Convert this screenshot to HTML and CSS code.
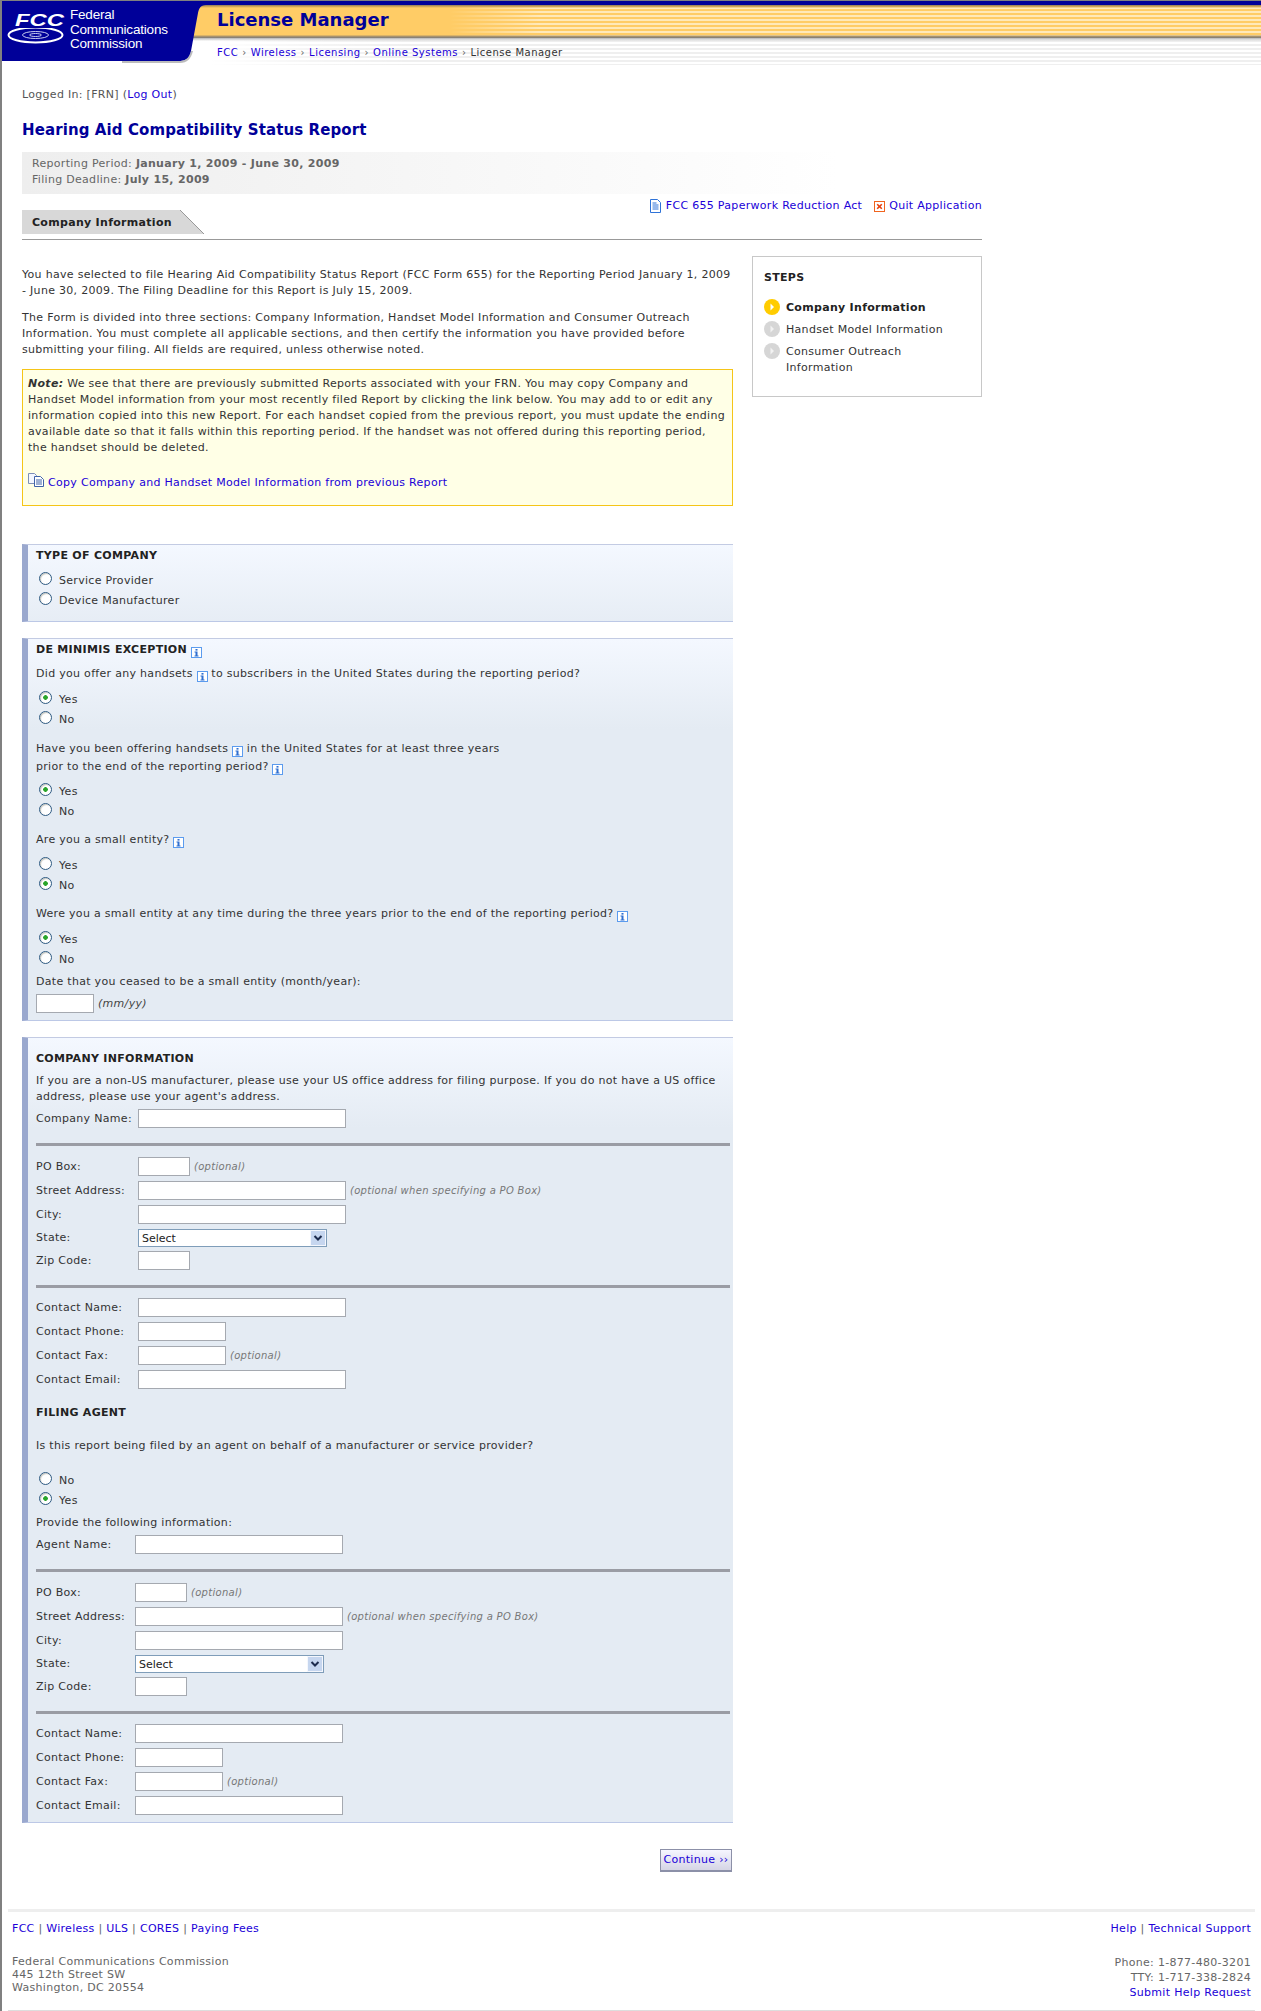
FILE: index.html
```html
<!DOCTYPE html>
<html lang="en">
<head>
<meta charset="utf-8">
<title>License Manager</title>
<link rel="stylesheet" href="styles.css">
</head>
<body>
<svg class="defs" width="0" height="0" aria-hidden="true">
  <defs>
    <symbol id="info" viewBox="0 0 11 11">
      <rect x="0.5" y="0.5" width="10" height="10" fill="#fff" stroke="#5b9bee"/>
      <rect x="4.5" y="2" width="2" height="1.6" fill="#2f6fd0"/>
      <path d="M3.500 4.500h3v4h1v1h-4v-1h1v-3h-1z" fill="#2f6fd0"/>
    </symbol>
  </defs>
</svg>

<header class="masthead">
  <div class="brand">
    <svg class="brand-shape" width="208" height="64" viewBox="0 0 208 64">
      <path d="M0 0H204V4C198 4 197 8 196 12L189 50C187 58 183 60 176 60H0Z" fill="#000099"/>
      <path d="M189 50C187 58 183 60 176 60H120V62H178C185 62 189 58 191 50Z" fill="#8f8f8f" opacity=".6"/>
      <ellipse cx="33.500" cy="34" rx="27" ry="7.500" fill="none" stroke="#fff" stroke-width="2"/>
      <ellipse cx="33.500" cy="34" rx="13" ry="3.500" fill="none" stroke="#c9cdf0" stroke-width="1"/>
      <ellipse cx="33.500" cy="34" rx="6" ry="1.500" fill="none" stroke="#c9cdf0" stroke-width="1"/>
      <rect x="10" y="12" width="54" height="15" fill="#000099"/>
      <text x="13" y="25" class="fcc-mark" textLength="49" lengthAdjust="spacingAndGlyphs">FCC</text>
    </svg>
    <div class="brand-name">Federal<br>Communications<br>Commission</div>
  </div>
  <div class="bands">
    <div class="title-band"><span class="app-title">License Manager</span></div>
    <nav class="crumbs"><a href="#">FCC</a><i>›</i><a href="#">Wireless</a><i>›</i><a href="#">Licensing</a><i>›</i><a href="#">Online Systems</a><i>›</i><span>License Manager</span></nav>
  </div>
</header>

<main class="page">
  <p class="login">Logged In: [FRN] (<a href="#">Log Out</a>)</p>
  <h1>Hearing Aid Compatibility Status Report</h1>
  <div class="period">
    <div>Reporting Period: <b>January 1, 2009 - June 30, 2009</b></div>
    <div>Filing Deadline: <b>July 15, 2009</b></div>
  </div>
  <div class="tabrow">
    <div class="tab">Company Information</div>
    <div class="toplinks">
      <svg class="ico-doc" width="11" height="14" viewBox="0 0 11 14"><path d="M.5.5h7l3 3v10H.5z" fill="#fff" stroke="#2f73d8"/><path d="M2.500 4h4M2.500 6h6M2.500 8h6M2.500 10h6" stroke="#2f73d8"/></svg>
      <a href="#">FCC 655 Paperwork Reduction Act</a>
      <svg class="ico-quit" width="11" height="11" viewBox="0 0 11 11"><rect x=".5" y=".5" width="10" height="10" fill="#fff" stroke="#f0641e"/><path d="M3.200 3.200l4.600 4.600M7.800 3.200L3.200 7.800" stroke="#e8400c" stroke-width="1.600"/></svg>
      <a href="#">Quit Application</a>
    </div>
  </div>

  <div class="columns">
    <div class="maincol">
      <p class="intro">You have selected to file Hearing Aid Compatibility Status Report (FCC Form 655) for the Reporting Period January 1, 2009 - June 30, 2009. The Filing Deadline for this Report is July 15, 2009.</p>
      <p class="intro">The Form is divided into three sections: Company Information, Handset Model Information and Consumer Outreach Information. You must complete all applicable sections, and then certify the information you have provided before submitting your filing. All fields are required, unless otherwise noted.</p>
      <div class="note">
        <p><b><em>Note:</em></b> We see that there are previously submitted Reports associated with your FRN. You may copy Company and Handset Model information from your most recently filed Report by clicking the link below. You may add to or edit any information copied into this new Report. For each handset copied from the previous report, you must update the ending available date so that it falls within this reporting period. If the handset was not offered during this reporting period, the handset should be deleted.</p>
        <div class="copylink">
          <svg class="ico-copy" width="16" height="14" viewBox="0 0 16 14"><path d="M.5.5h6l2 2v8H.5z" fill="#f4f7ff" stroke="#7d8fb8"/><path d="M6.500 3.500h6l3 3v7h-9z" fill="#fff" stroke="#3f62a8"/><path d="M8 7h6M8 9h6M8 11h6" stroke="#3f62a8"/></svg>
          <a href="#">Copy Company and Handset Model Information from previous Report</a>
        </div>
      </div>

      <form>
        <section class="panel panel-type">
          <h2>TYPE OF COMPANY</h2>
          <div class="choices">
            <label class="choice"><input type="radio" name="t"><span>Service Provider</span></label>
            <label class="choice"><input type="radio" name="t"><span>Device Manufacturer</span></label>
          </div>
        </section>

        <section class="panel panel-minimis">
          <h2>DE MINIMIS EXCEPTION <svg class="info"><use href="#info"/></svg></h2>
          <p class="q">Did you offer any handsets <svg class="info"><use href="#info"/></svg> to subscribers in the United States during the reporting period?</p>
          <div class="choices">
            <label class="choice"><input type="radio" name="a" checked><span>Yes</span></label>
            <label class="choice"><input type="radio" name="a"><span>No</span></label>
          </div>
          <p class="q q-two">Have you been offering handsets <svg class="info"><use href="#info"/></svg> in the United States for at least three years<br>prior to the end of the reporting period? <svg class="info"><use href="#info"/></svg></p>
          <div class="choices">
            <label class="choice"><input type="radio" name="b" checked><span>Yes</span></label>
            <label class="choice"><input type="radio" name="b"><span>No</span></label>
          </div>
          <p class="q">Are you a small entity? <svg class="info"><use href="#info"/></svg></p>
          <div class="choices">
            <label class="choice"><input type="radio" name="c"><span>Yes</span></label>
            <label class="choice"><input type="radio" name="c" checked><span>No</span></label>
          </div>
          <p class="q">Were you a small entity at any time during the three years prior to the end of the reporting period? <svg class="info"><use href="#info"/></svg></p>
          <div class="choices">
            <label class="choice"><input type="radio" name="d" checked><span>Yes</span></label>
            <label class="choice"><input type="radio" name="d"><span>No</span></label>
          </div>
          <p class="q q-date">Date that you ceased to be a small entity (month/year):</p>
          <div class="daterow"><input type="text" class="field w-date"><em class="unit">(mm/yy)</em></div>
        </section>

        <section class="panel panel-company">
          <h2>COMPANY INFORMATION</h2>
          <p class="lead">If you are a non-US manufacturer, please use your US office address for filing purpose. If you do not have a US office address, please use your agent's address.</p>
          <div class="row"><label>Company Name:</label><input type="text" class="field w-long"></div>
          <hr class="sep">
          <div class="row"><label>PO Box:</label><input type="text" class="field w-short"><em class="hint">(optional)</em></div>
          <div class="row"><label>Street Address:</label><input type="text" class="field w-long"><em class="hint">(optional when specifying a PO Box)</em></div>
          <div class="row"><label>City:</label><input type="text" class="field w-long"></div>
          <div class="row row-select"><label>State:</label><div class="selectbox"><select><option>Select</option></select><svg class="selectbtn" width="16" height="16" viewBox="0 0 16 16"><rect x=".5" y=".5" width="15" height="15" fill="#c6d6ef" stroke="#f4f7fd"/><path d="M4.500 6l3.500 3.500L11.500 6" fill="none" stroke="#1c2b4d" stroke-width="2"/></svg></div></div>
          <div class="row"><label>Zip Code:</label><input type="text" class="field w-short"></div>
          <hr class="sep sep-b">
          <div class="row"><label>Contact Name:</label><input type="text" class="field w-long"></div>
          <div class="row"><label>Contact Phone:</label><input type="text" class="field w-mid"></div>
          <div class="row"><label>Contact Fax:</label><input type="text" class="field w-mid"><em class="hint">(optional)</em></div>
          <div class="row"><label>Contact Email:</label><input type="text" class="field w-long"></div>

          <h2 class="agent-h">FILING AGENT</h2>
          <p class="q-agent">Is this report being filed by an agent on behalf of a manufacturer or service provider?</p>
          <div class="choices choices-agent">
            <label class="choice"><input type="radio" name="e"><span>No</span></label>
            <label class="choice"><input type="radio" name="e" checked><span>Yes</span></label>
          </div>
          <p class="q-provide">Provide the following information:</p>
          <div class="agent">
            <div class="row"><label>Agent Name:</label><input type="text" class="field w-long"></div>
            <hr class="sep">
            <div class="row"><label>PO Box:</label><input type="text" class="field w-short"><em class="hint">(optional)</em></div>
            <div class="row"><label>Street Address:</label><input type="text" class="field w-long"><em class="hint">(optional when specifying a PO Box)</em></div>
            <div class="row"><label>City:</label><input type="text" class="field w-long"></div>
            <div class="row row-select"><label>State:</label><div class="selectbox"><select><option>Select</option></select><svg class="selectbtn" width="16" height="16" viewBox="0 0 16 16"><rect x=".5" y=".5" width="15" height="15" fill="#c6d6ef" stroke="#f4f7fd"/><path d="M4.500 6l3.500 3.500L11.500 6" fill="none" stroke="#1c2b4d" stroke-width="2"/></svg></div></div>
            <div class="row"><label>Zip Code:</label><input type="text" class="field w-short"></div>
            <hr class="sep sep-b">
            <div class="row"><label>Contact Name:</label><input type="text" class="field w-long"></div>
            <div class="row"><label>Contact Phone:</label><input type="text" class="field w-mid"></div>
            <div class="row"><label>Contact Fax:</label><input type="text" class="field w-mid"><em class="hint">(optional)</em></div>
            <div class="row row-last"><label>Contact Email:</label><input type="text" class="field w-long"></div>
          </div>
        </section>
        <div class="actions"><a class="btn" href="#">Continue ››</a></div>
      </form>
    </div>

    <aside class="steps">
      <h3>STEPS</h3>
      <ol>
        <li class="current"><svg class="dot" width="16" height="16" viewBox="0 0 16 16"><circle cx="8" cy="8" r="8" fill="#ffcc00"/><path d="M6.500 4.500L10 8l-3.500 3.500z" fill="#fff"/></svg><span>Company Information</span></li>
        <li><svg class="dot" width="16" height="16" viewBox="0 0 16 16"><circle cx="8" cy="8" r="8" fill="#d6d6d6"/><path d="M6.500 4.500L10 8l-3.500 3.500z" fill="#f2f2f2"/></svg><span>Handset Model Information</span></li>
        <li><svg class="dot" width="16" height="16" viewBox="0 0 16 16"><circle cx="8" cy="8" r="8" fill="#d6d6d6"/><path d="M6.500 4.500L10 8l-3.500 3.500z" fill="#f2f2f2"/></svg><span>Consumer Outreach Information</span></li>
      </ol>
    </aside>
  </div>
</main>

<footer class="foot">
  <div class="foot-links">
    <div><a href="#">FCC</a> | <a href="#">Wireless</a> | <a href="#">ULS</a> | <a href="#">CORES</a> | <a href="#">Paying Fees</a></div>
    <div><a href="#">Help</a> | <a href="#">Technical Support</a></div>
  </div>
  <div class="foot-info">
    <address>Federal Communications Commission<br>445 12th Street SW<br>Washington, DC 20554</address>
    <div class="foot-contact">Phone: 1-877-480-3201<br>TTY: 1-717-338-2824<br><a href="#">Submit Help Request</a></div>
  </div>
</footer>
</body>
</html>
```
FILE: styles.css
```css
* { box-sizing: border-box; }
html, body { margin: 0; padding: 0; }
body {
  width: 1261px;
  height: 2011px;
  overflow: hidden;
  background: #fff;
  border-top: 1px solid #808080;
  border-left: 2px solid #808080;
  font: 11px/16px "DejaVu Sans", Verdana, sans-serif;
  letter-spacing: .3px;
  color: #333;
}
a { color: #2000d8; text-decoration: none; }
p { margin: 0; }
.defs { position: absolute; }

/* Masthead */
.masthead { display: flex; height: 64px; background: linear-gradient(#000099 4px, transparent 4px); }
.brand { position: relative; z-index: 1; flex: 0 0 208px; height: 64px; margin-right: -60px; }
.brand-shape { display: block; }
.fcc-mark { font: italic 700 17px "Liberation Sans", Arial, sans-serif; fill: #fff; letter-spacing: 0; }
.brand-name {
  position: absolute; left: 68px; top: 7px;
  font: 13.500px/14.500px "Liberation Sans", Arial, sans-serif;
  letter-spacing: -.2px;
  color: #fff;
}
.bands { flex: 1; display: flex; flex-direction: column; }
.title-band {
  height: 33px; margin-top: 4px;
  padding-left: 67px;
  background:
    linear-gradient(#8d7a5c, #e0b35a 2px, transparent 3px, transparent 30px, #b59a6a 31px, #7a7a7a 33px),
    linear-gradient(to right, #ffcc66 300px, rgba(255,204,102,0) 390px),
    repeating-linear-gradient(#ffcc66 0 2px, #ffe9ba 2px 4px);
}
.app-title { font: 700 18px/29px "DejaVu Sans", Verdana, sans-serif; letter-spacing: 0; color: #000099; }
.crumbs {
  height: 27px; padding: 7px 0 0 67px;
  font-size: 10px;
  letter-spacing: .5px;
  line-height: 16px;
  color: #333;
  background:
    linear-gradient(#b5b5b5, transparent 3px),
    linear-gradient(to right, #fff 60px, rgba(255,255,255,.4) 160px, rgba(255,255,255,0) 260px),
    repeating-linear-gradient(#fff 0 2px, #efefef 2px 4px);
}
.crumbs i { font-style: normal; margin: 0 4px; color: #666; }

/* Page */
.page { width: 960px; margin-left: 20px; }
.login { padding-top: 22px; color: #555; }
h1 { margin: 17px 0 0; font: 700 15px/20px "DejaVu Sans", Verdana, sans-serif; letter-spacing: .1px; color: #000099; }
.period {
  margin-top: 12px; height: 42px; padding: 4px 10px 0;
  background: linear-gradient(to right, #eeeeee, #fff 85%);
  color: #666;
}
.tabrow { display: flex; justify-content: space-between; height: 46px; padding-top: 4px; border-bottom: 1px solid #999; }
.tab {
  position: relative; margin-top: 12px; width: 158px; height: 24px;
  padding-left: 10px;
  line-height: 26px;
  font-weight: 700;
  color: #222;
  background: #d8d8d8;
}
.tab::after {
  content: ""; position: absolute; left: 158px; top: 0; width: 24px; height: 24px;
  background: linear-gradient(to top right, #d8d8d8 48%, #999 49%, #999 51%, transparent 52%);
}
.toplinks { display: flex; align-items: center; height: 16px; }
.ico-doc { margin-right: 5px; }
.ico-quit { margin: 0 4px 0 12px; }

.columns { display: flex; justify-content: space-between; align-items: flex-start; }
.maincol { width: 711px; padding-top: 27px; }
.intro { margin-bottom: 11px; color: #333; }

.note { border: 1px solid #f5c518; background: #ffffe6; padding: 6px 4px 15px 5px; height: 137px; }
.copylink { display: flex; align-items: center; margin-top: 19px; }
.ico-copy { margin: -6px 4px 0 0; }

/* Panels */
.panel {
  margin-top: 16px;
  border-top: 1px solid #c3cbe3;
  border-bottom: 1px solid #bcc8e6;
  border-left: 6px solid #9aa8ce;
  padding-left: 8px;
  background: linear-gradient(#f4f8ff, #e4ebf3 90px);
}
h2 { margin: 0; height: 16px; font: 700 11px/16px "DejaVu Sans", Verdana, sans-serif; color: #222; }
.info { display: inline-block; width: 11px; height: 11px; vertical-align: -5px; }
.panel-type { margin-top: 38px; padding-top: 3px; padding-bottom: 12px; }
.choices { margin-top: 9px; margin-bottom: 12px; }
.panel-type .choices { margin-bottom: 0; }
.choice { display: flex; height: 16px; margin-bottom: 4px; }
.choice:last-child { margin-bottom: 0; }
.choice span { margin-left: 7px; }
.choice input {
  appearance: none; -webkit-appearance: none;
  flex: none;
  width: 13px; height: 13px; margin: -1px 0 0 3px;
  border: 1px solid #2e5a82; border-radius: 50%;
  background: #fff;
  box-shadow: inset 1px 1px 1px #c8c8c0;
}
.choice input:checked { background: radial-gradient(circle, #2aa52a 0 2px, #fff 2.600px); }

.panel-minimis { padding-top: 3px; padding-bottom: 7px; }
.q { margin-top: 8px; height: 16px; }
.q + .choices { margin-top: 10px; }
.choices + .q { margin-top: 0; }
.q-two { height: 34px; line-height: 18px; margin-top: -1px; }
.q-two + .choices { margin-top: 10px; }
.choices + .q-date { margin-top: -6px; }
.daterow { display: flex; align-items: center; margin-top: 4px; }
.unit { margin-left: 4px; color: #444; }

.panel-company { padding-top: 13px; padding-bottom: 7px; padding-right: 3px; }
.lead { margin-top: 6px; margin-bottom: 4px; }
.field { display: block; flex: none; height: 19px; border: 1px solid #a5a9b0; background: #fff; padding: 0; margin: 0; }
.w-long { width: 208px; }
.w-short { width: 52px; }
.w-mid { width: 88px; }
.w-date { width: 58px; }
.row { display: flex; align-items: center; min-height: 19px; margin-bottom: 5px; }
.row label { flex: 0 0 102px; }
.agent .row label { flex-basis: 99px; }
.hint { margin-left: 4px; font-size: 10px; color: #777; }
.sep { height: 3px; border: 0; background: #9a9ca4; margin: 15px 0 11px; }
.sep-b { margin: 15px 0 10px; }
.row-select { min-height: 18px; margin-bottom: 4px; }
.selectbox { position: relative; width: 189px; height: 18px; }
.selectbox select {
  appearance: none; -webkit-appearance: none;
  display: block; width: 100%; height: 18px;
  border: 1px solid #7f9db9; border-radius: 0;
  background: #fff;
  padding: 0 0 0 3px;
  font: 11px "DejaVu Sans", Verdana, sans-serif;
  color: #222;
}
.selectbtn { position: absolute; right: 1px; top: 1px; }
.agent-h { margin-top: 16px; }
.q-agent { margin-top: 17px; }
.choices-agent { margin-top: 19px; margin-bottom: 6px; }
.q-provide { margin-bottom: 4px; }
.row-last { margin-bottom: 0; }

.actions { display: flex; justify-content: flex-end; margin-top: 26px; padding-right: 1px; }
.btn {
  display: block; width: 72px; height: 23px; line-height: 20px; text-align: center;
  border: 1px solid #8c90a8; border-bottom-width: 2px;
  background: linear-gradient(#f6f6ff, #d5d5e5);
}

/* Steps */
.steps { width: 230px; height: 141px; margin-top: 16px; border: 1px solid #c8c8c8; padding: 13px 14px 0 11px; }
.steps h3 { margin: 0; font: 700 11px/16px "DejaVu Sans", Verdana, sans-serif; color: #222; }
.steps ol { list-style: none; margin: 14px 0 0; padding: 0; }
.steps li { display: flex; margin-bottom: 6px; }
.steps li span { margin-left: 6px; }
.dot { flex: none; margin-top: -1px; }
.current { font-weight: 700; color: #222; }

/* Footer */
.foot { margin: 37px 0 0 6px; width: 1247px; height: 102px; border-top: 3px solid #eeeeee; border-bottom: 1px solid #dddddd; padding: 9px 4px 0; color: #666; }
.foot-links { display: flex; justify-content: space-between; }
.foot-info { display: flex; justify-content: space-between; margin-top: 17px; }
address { font-style: normal; line-height: 13px; padding-top: 1px; }
.foot-contact { text-align: right; line-height: 15px; padding-top: 1px; }
```
